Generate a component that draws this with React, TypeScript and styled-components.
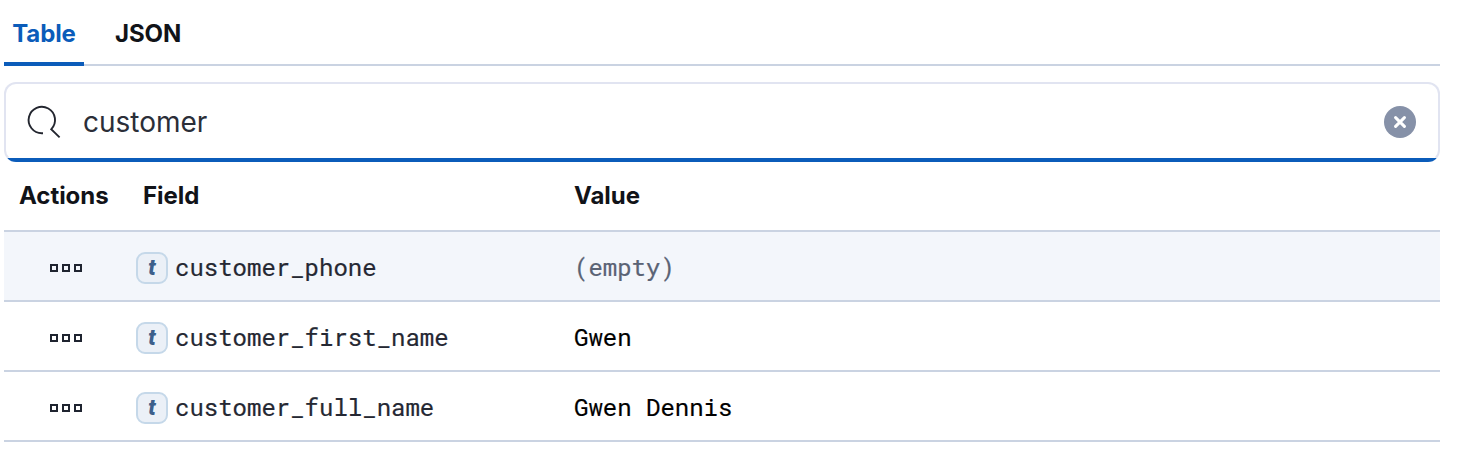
import React from "react";
import styled, { createGlobalStyle } from "styled-components";

const GlobalStyle = createGlobalStyle`
  * { box-sizing: border-box; }
  body {
    margin: 0;
    background: #fff;
    color: #111318;
    font-family: Inter, "Liberation Sans", sans-serif;
  }
`;

const Panel = styled.main`
  width: 1440px;
  padding-left: 4px;
`;

const Tabs = styled.nav`
  display: flex;
  gap: 24px;
  height: 66px;
  box-shadow: inset 0 -2px 0 #cad3e2;
`;

const Tab = styled.button<{ $active?: boolean }>`
  min-width: 80px;
  height: 66px;
  padding: 5px 7px 0;
  border: 0;
  border-bottom: 4px solid ${(p) => (p.$active ? "#0b5cba" : "transparent")};
  background: none;
  color: ${(p) => (p.$active ? "#0b5cba" : "#111318")};
  font: 700 24px/57px Inter, sans-serif;
  letter-spacing: -0.1px;
`;

const SearchBox = styled.label`
  display: flex;
  align-items: center;
  height: 80px;
  margin-top: 16px;
  padding: 0 22px 0 20px;
  border: 2px solid #e1e4f1;
  border-bottom-color: transparent;
  border-radius: 12px;
  background: linear-gradient(#0b5cba, #0b5cba) 0 100% / 100% 4px no-repeat border-box, #fff;
`;

const SearchInput = styled.input`
  flex: 1;
  min-width: 0;
  height: 60px;
  margin-left: 21px;
  padding: 0;
  border: 0;
  outline: 0;
  background: none;
  color: #2b2e38;
  font: 400 28px/40px Inter, sans-serif;
  letter-spacing: 0;
`;

const ClearButton = styled.button`
  display: grid;
  place-items: center;
  width: 32px;
  height: 32px;
  padding: 0;
  border: 0;
  border-radius: 50%;
  background: #8691a8;
`;

const Row = styled.div<{ $shaded?: boolean }>`
  display: grid;
  grid-template-columns: 124px 438px 1fr;
  align-items: center;
  height: 70px;
  border-bottom: 2px solid #cad3e2;
  background: ${(p) => (p.$shaded ? "#f3f6fb" : "#fff")};
`;

const HeaderRow = styled(Row)`
  padding-bottom: 2px;
  font-size: 24px;
  font-weight: 700;
  letter-spacing: -0.05px;
`;

const HeaderCell = styled.div<{ $indent: number }>`
  padding-left: ${(p) => p.$indent}px;
`;

const Actions = styled.div`
  display: flex;
  justify-content: center;
  gap: 4px;
  padding-top: 4px;
`;

const Square = styled.i`
  width: 8px;
  height: 8px;
  border: 2px solid #1f2430;
`;

const Field = styled.div`
  display: flex;
  align-items: center;
  gap: 7px;
  padding: 4px 0 0 8px;
`;

const Token = styled.span`
  display: grid;
  place-items: center;
  width: 32px;
  height: 32px;
  border: 2px solid #c5d8e9;
  border-radius: 9px;
  background: #ebf0f7;
`;

const Mono = styled.span<{ $color: string }>`
  color: ${(p) => p.$color};
  font: 400 24px/32px "Roboto Mono", "Liberation Mono", monospace;
  -webkit-text-stroke: 0.2px currentColor;
  white-space: pre;
`;

const FieldName = styled(Mono)`
  margin-bottom: 2px;
`;

const Value = styled.div`
  padding: 2px 0 0 8px;
`;

const TokenLetter = styled.b`
  color: #3c5f8b;
  font: italic 900 22px/24px Roboto, sans-serif;
`;

const rows = [
  { field: "customer_phone", value: "(empty)", empty: true },
  { field: "customer_first_name", value: "Gwen" },
  { field: "customer_full_name", value: "Gwen Dennis" },
];

export default function App() {
  return (
    <>
      <GlobalStyle />
      <Panel>
        <Tabs>
          <Tab $active>Table</Tab>
          <Tab>JSON</Tab>
        </Tabs>
        <SearchBox>
          <svg width="36" height="36" viewBox="0 0 36 36" fill="none" stroke="#23262f" strokeWidth="1.9">
            <path d="M17 29.2H16.1A13.2 13.2 0 1 1 25.2 25.3L33.6 33.4" />
          </svg>
          <SearchInput defaultValue="customer" aria-label="Search" />
          <ClearButton aria-label="Clear">
            <svg width="12" height="12" viewBox="0 0 12 12" stroke="#fff" strokeWidth="3" strokeLinecap="round">
              <path d="M1.6 1.6L10.4 10.4M10.4 1.6L1.6 10.4" />
            </svg>
          </ClearButton>
        </SearchBox>
        <HeaderRow>
          <HeaderCell $indent={15}>Actions</HeaderCell>
          <HeaderCell $indent={15}>Field</HeaderCell>
          <HeaderCell $indent={8}>Value</HeaderCell>
        </HeaderRow>
        {rows.map((row) => (
          <Row key={row.field} $shaded={row.empty}>
            <Actions>
              <Square />
              <Square />
              <Square />
            </Actions>
            <Field>
              <Token>
                <TokenLetter>t</TokenLetter>
              </Token>
              <FieldName $color="#252833">{row.field}</FieldName>
            </Field>
            <Value>
              <Mono $color={row.empty ? "#5a6375" : "#000"}>{row.value}</Mono>
            </Value>
          </Row>
        ))}
      </Panel>
    </>
  );
}
